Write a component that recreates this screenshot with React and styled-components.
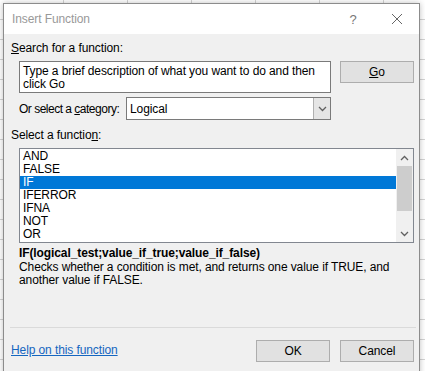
import styled, { createGlobalStyle } from 'styled-components';

const GlobalStyle = createGlobalStyle`
  html, body {
    margin: 0;
    padding: 0;
    height: 100%;
    overflow: hidden;
  }
  body {
    font-family: "Segoe UI", "Liberation Sans", Arial, sans-serif;
    font-size: 12px;
    letter-spacing: -0.1px;
    color: #000;
  }
`;

const Sheet = styled.div`
  width: 425px;
  height: 371px;
  background-color: #fff;
  background-image:
    repeating-linear-gradient(to bottom, transparent 0 19px, #d4d4d4 19px 20px),
    repeating-linear-gradient(to right, transparent 0 63px, #d4d4d4 63px 64px);
  padding: 3px 0 0 3px;
  box-sizing: border-box;
`;

const Dialog = styled.div`
  width: 417px;
  height: 380px;
  box-sizing: border-box;
  border: 1px solid #8c8c8c;
  background: #f0f0f0;
  display: flex;
  flex-direction: column;
  box-shadow: 0 0 6px rgba(0, 0, 0, 0.25);
`;

const TitleBar = styled.div`
  height: 30px;
  background: #fff;
  display: flex;
  align-items: center;
  padding-left: 8px;
  color: #999;
  font-size: 12px;
`;

const Title = styled.span`
  flex: 1;
`;

const TitleButton = styled.span`
  width: 44px;
  display: flex;
  justify-content: center;
  align-items: center;
  color: #777;
  font-size: 13px;
`;

const Body = styled.div`
  flex: 1;
  display: flex;
  flex-direction: column;
  padding: 6px 5px 0 7px;
  white-space: nowrap;
`;

const Label = styled.div`
  line-height: 16px;
  height: 16px;
  margin-top: ${(p) => p.$top || 0}px;
`;

const Row = styled.div`
  display: flex;
  align-items: ${(p) => p.$align || 'flex-start'};
  margin-left: 8px;
  margin-top: ${(p) => p.$top || 0}px;
  gap: ${(p) => p.$gap || 0}px;
`;

const SearchBox = styled.div`
  width: 312px;
  height: 32px;
  box-sizing: border-box;
  border: 1px solid #7a7a7a;
  background: #fff;
  padding: 3px 3px 0 3px;
  line-height: 13px;
  white-space: normal;
`;

const Button = styled.div`
  width: 74px;
  height: 22px;
  box-sizing: border-box;
  border: 1px solid #adadad;
  background: #e1e1e1;
  display: flex;
  align-items: center;
  justify-content: center;
  margin-left: ${(p) => p.$left || 0}px;
`;

const CategoryLabel = styled.span`
  width: 107px;
  letter-spacing: -0.5px;
  overflow: hidden;
`;

const Select = styled.div`
  width: 205px;
  height: 23px;
  box-sizing: border-box;
  border: 1px solid #7a7a7a;
  background: #fff;
  display: flex;
  align-items: center;
`;

const SelectValue = styled.span`
  flex: 1;
  padding-left: 3px;
`;

const DropButton = styled.span`
  width: 17px;
  height: 21px;
  box-sizing: border-box;
  border-left: 1px solid #b0b0b0;
  background: #e5e5e5;
  display: flex;
  align-items: center;
  justify-content: center;
`;

const ListBox = styled.div`
  width: 395px;
  height: 95px;
  box-sizing: border-box;
  border: 1px solid #828790;
  background: #fff;
  display: flex;
  margin-left: 8px;
  margin-top: 5px;
`;

const Items = styled.div`
  flex: 1;
  padding-top: 1px;
  overflow: hidden;
`;

const Item = styled.div`
  height: 13px;
  line-height: 13px;
  padding-left: 3px;
  background: ${(p) => (p.$selected ? '#0078d7' : 'transparent')};
  color: ${(p) => (p.$selected ? '#fff' : '#000')};
`;

const ScrollBar = styled.div`
  width: 17px;
  background: #f0f0f0;
  display: flex;
  flex-direction: column;
  align-items: center;
`;

const Arrow = styled.div`
  height: 17px;
  width: 17px;
  display: flex;
  align-items: center;
  justify-content: center;
`;

const Thumb = styled.div`
  width: 15px;
  height: 45px;
  background: #cdcdcd;
`;

const Track = styled.div`
  flex: 1;
`;

const Syntax = styled.div`
  font-weight: bold;
  margin-left: 8px;
  margin-top: 2px;
  line-height: 16px;
`;

const Description = styled.div`
  margin-left: 8px;
  line-height: 13px;
  width: 385px;
  white-space: normal;
`;

const Separator = styled.div`
  height: 1px;
  background: #dadada;
  margin: auto -2px 0 -1px;
`;

const Footer = styled.div`
  display: flex;
  align-items: flex-start;
  height: 54px;
  padding-top: 12px;
  box-sizing: border-box;
`;

const HelpLink = styled.a`
  color: #1566c0;
  text-decoration: underline;
  flex: 1;
  line-height: 16px;
  margin-top: 2px;
`;

const functions = ['AND', 'FALSE', 'IF', 'IFERROR', 'IFNA', 'NOT', 'OR'];

const Chevron = ({ up }) => (
  <svg width="9" height="6" viewBox="0 0 9 6">
    <path
      d={up ? 'M1 5 L4.5 1.5 L8 5' : 'M1 1 L4.5 4.5 L8 1'}
      fill="none"
      stroke="#606060"
      strokeWidth="1.3"
    />
  </svg>
);

export default function App() {
  return (
    <>
      <GlobalStyle />
      <Sheet>
        <Dialog>
          <TitleBar>
            <Title>Insert Function</Title>
            <TitleButton>?</TitleButton>
            <TitleButton>
              <svg width="12" height="12" viewBox="0 0 12 12">
                <path d="M1 1 L11 11 M11 1 L1 11" stroke="#666" strokeWidth="1" />
              </svg>
            </TitleButton>
          </TitleBar>
          <Body>
            <Label>
              <u>S</u>earch for a function:
            </Label>
            <Row $top={5} $gap={9}>
              <SearchBox>Type a brief description of what you want to do and then click Go</SearchBox>
              <Button>
                <span>
                  <u>G</u>o
                </span>
              </Button>
            </Row>
            <Row $top={4} $align="center">
              <CategoryLabel>
                Or select a <u>c</u>ategory:
              </CategoryLabel>
              <Select>
                <SelectValue>Logical</SelectValue>
                <DropButton>
                  <Chevron />
                </DropButton>
              </Select>
            </Row>
            <Label $top={7}>
              Select a functio<u>n</u>:
            </Label>
            <ListBox>
              <Items>
                {functions.map((f) => (
                  <Item key={f} $selected={f === 'IF'}>
                    {f}
                  </Item>
                ))}
              </Items>
              <ScrollBar>
                <Arrow>
                  <Chevron up />
                </Arrow>
                <Thumb />
                <Track />
                <Arrow>
                  <Chevron />
                </Arrow>
              </ScrollBar>
            </ListBox>
            <Syntax>IF(logical_test;value_if_true;value_if_false)</Syntax>
            <Description>
              Checks whether a condition is met, and returns one value if TRUE, and another value if FALSE.
            </Description>
            <Separator />
            <Footer>
              <HelpLink>Help on this function</HelpLink>
              <Button>OK</Button>
              <Button $left={10}>Cancel</Button>
            </Footer>
          </Body>
        </Dialog>
      </Sheet>
    </>
  );
}
